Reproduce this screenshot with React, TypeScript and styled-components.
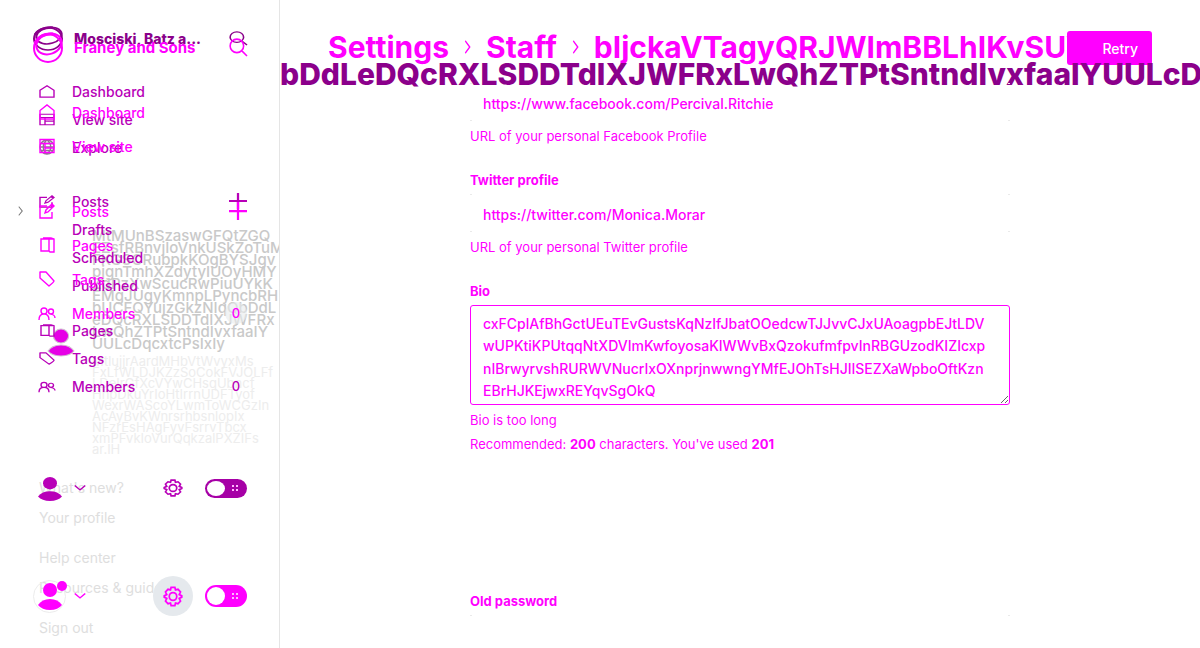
import React from 'react';
import styled, { createGlobalStyle } from 'styled-components';

const pink = '#ff00ff';
const violet = '#b800b8';
const plum = '#8b008b';

const Global = createGlobalStyle`
  * { box-sizing: border-box; }
  body { margin: 0; background: #fff; font-family: Inter, "Liberation Sans", sans-serif; font-size: 14px; }
  button, input, textarea { font: inherit; color: inherit; }
  button { border: 0; padding: 0; background: none; }
  a { color: inherit; text-decoration: none; }
  svg { display: block; flex: none; }
`;

const Page = styled.div`
  display: grid;
  grid-template-columns: 280px minmax(0, 1fr);
  height: 100vh;
  overflow: hidden;
`;

const Sidebar = styled.aside`
  display: grid;
  grid-template-columns: minmax(0, 1fr);
  grid-template-rows: minmax(0, 1fr);
  border-right: 1px solid #e5e5e5;
  overflow: hidden;
`;

const Layer = styled.div<{ $color: string; $top: number; $bottom?: number }>`
  grid-area: 1 / 1;
  display: flex;
  flex-direction: column;
  min-height: 0;
  padding: ${p => p.$top}px 32px ${p => p.$bottom ?? 0}px 33px;
  color: ${p => p.$color};
`;

const Brand = styled.header<{ $height: number; $color: string; $size: number; $weight: number }>`
  display: flex;
  align-items: center;
  flex: none;
  gap: 11px;
  height: ${p => p.$height}px;
  color: ${p => p.$color};
  font-size: ${p => p.$size}px;
  font-weight: ${p => p.$weight};
  white-space: nowrap;
`;

const BrandName = styled.span`
  flex: 1;
`;

const NavList = styled.ul<{ $gap: number }>`
  list-style: none;
  margin: ${p => p.$gap}px 0 0;
  padding: 0 0 0 6px;
`;

const NavRow = styled.li<{ $height: number }>`
  display: flex;
  align-items: center;
  height: ${p => p.$height}px;
  font-weight: 500;
`;

const NavLink = styled.a`
  display: flex;
  align-items: center;
  flex: 1;
`;

const IconSlot = styled.span<{ $muted: boolean }>`
  width: 33px;
  color: ${p => (p.$muted ? '#8f778f' : 'inherit')};
`;

const Count = styled.span<{ $fill: string }>`
  display: grid;
  place-items: center;
  width: 22px;
  height: 22px;
  border-radius: 50%;
  background: ${p => p.$fill};
  font-size: 13px;
`;

const PlusButton = styled.button`
  width: 18px;
`;

const Expander = styled.button`
  width: 8px;
  margin-left: -22px;
  margin-right: 14px;
  color: #777;
`;

const UserRow = styled.div`
  display: flex;
  align-items: center;
  flex: none;
  height: 40px;
  margin-top: auto;
`;

const Avatar = styled.button<{ $ring: string }>`
  position: relative;
  display: grid;
  place-items: center;
  width: 33px;
  height: 33px;
  margin-right: 8px;
  border: 1px solid ${p => p.$ring};
  border-radius: 50%;
`;

const Badge = styled.span`
  position: absolute;
  top: 0;
  right: -2px;
  width: 10px;
  height: 10px;
  border-radius: 50%;
  background: ${pink};
`;

const GearButton = styled.button<{ $fill: string }>`
  display: grid;
  place-items: center;
  width: 40px;
  height: 40px;
  margin-left: auto;
  margin-right: 12px;
  border-radius: 50%;
  background: ${p => p.$fill};
`;

const Toggle = styled.input<{ $color: string; $height: number }>`
  appearance: none;
  display: flex;
  align-items: center;
  width: 42px;
  height: ${p => p.$height}px;
  margin: 0;
  padding: 0 8px 0 2px;
  border-radius: 11px;
  background: ${p => p.$color};
  &::before {
    content: '';
    width: 18px;
    height: ${p => p.$height - 4}px;
    border-radius: 50%;
    background: #fff;
  }
  &::after {
    content: '';
    width: 8px;
    height: 8px;
    margin-left: auto;
    background: radial-gradient(circle, #ffb8ff 1px, transparent 1px) 0 0 / 4px 4px;
  }
`;

const UserCard = styled.div`
  display: flex;
  gap: 18px;
  color: #c9c9c9;
`;

const UserText = styled.div`
  flex: none;
`;

const UserName = styled.div`
  font-size: 15px;
  font-weight: 500;
  line-height: 12px;
  white-space: pre;
`;

const UserMail = styled.div`
  margin-top: 6px;
  color: #ededed;
  font-size: 13px;
  line-height: 11px;
  white-space: pre;
`;

const CardAvatar = styled.div`
  display: flex;
  width: 42px;
  padding: 99px 0 0 15px;
  color: #e600e6;
`;

const Menu = styled.nav`
  display: flex;
  flex-direction: column;
  margin-top: auto;
  padding-left: 6px;
  line-height: 20px;
`;

const MenuLink = styled.a<{ $gap?: number }>`
  margin-top: ${p => p.$gap ?? 10}px;
`;

const Main = styled.main`
  display: flex;
  flex-direction: column;
  min-width: 0;
  overflow: hidden;
  color: ${pink};
`;

const TopBar = styled.header`
  display: flex;
  flex: none;
  align-items: center;
  height: 65px;
  padding: 31px 48px 0 48px;
`;

const Crumbs = styled.h2`
  display: flex;
  align-items: center;
  flex: 1;
  min-width: 0;
  margin: 0;
  gap: 14px;
  overflow: hidden;
  font-size: 30px;
  font-weight: 700;
  line-height: 32px;
  padding-bottom: 2px;
  white-space: nowrap;
`;

const Retry = styled.button`
  display: flex;
  align-items: center;
  justify-content: flex-end;
  width: 85px;
  height: 34px;
  padding-right: 14px;
  border-radius: 3px;
  background: ${pink};
  color: #fff;
  font-size: 14px;
  font-weight: 500;
`;

const Banner = styled.h1`
  flex: none;
  height: 18px;
  margin: 0;
  color: ${plum};
  font-size: 30px;
  font-weight: 800;
  line-height: 18px;
  white-space: nowrap;
`;

const Form = styled.form`
  width: 540px;
  max-width: 100%;
  margin: 0 auto;
`;

const Field = styled.div<{ $gap?: number }>`
  display: flex;
  flex-direction: column;
  margin-bottom: ${p => p.$gap ?? 28}px;
`;

const Label = styled.label`
  margin-bottom: 6px;
  font-size: 13px;
  font-weight: 700;
  line-height: 16px;
`;

const TextBox = styled.input`
  height: 38px;
  padding: 3px 13px 0;
  border: 0;
  outline: 0;
  font-size: 14px;
  font-weight: 500;
  background:
    linear-gradient(#eaeaea, #eaeaea) 0 0 / 2px 1px no-repeat,
    linear-gradient(#eaeaea, #eaeaea) 100% 0 / 2px 1px no-repeat,
    linear-gradient(#eaeaea, #eaeaea) 0 100% / 2px 1px no-repeat,
    linear-gradient(#eaeaea, #eaeaea) 100% 100% / 2px 1px no-repeat;
`;

const BioBox = styled.textarea`
  height: 100px;
  padding: 7px 12px;
  border: 1px solid ${pink};
  border-radius: 3px;
  outline: 0;
  overflow: hidden;
  font-size: 14px;
  font-weight: 500;
  line-height: 1.6;
`;

const Help = styled.p<{ $gap?: number }>`
  margin: ${p => p.$gap ?? 7}px 0 0;
  font-size: 13px;
  line-height: 16px;
`;

type IconName = 'home' | 'site' | 'globe' | 'posts' | 'pages' | 'tag' | 'members' | 'search' | 'plus' | 'right' | 'down' | 'gear';

const shapes: Record<IconName, React.ReactNode> = {
  home: <path d="M1 6.500 8 1l7 5.500V15H1Z" />,
  site: <path d="M1 1.500h14v13H1ZM1 5.500h14M6 5.500v9M6 10h9" />,
  globe: <path d="M8 1a7 7 0 1 0 0 14A7 7 0 0 0 8 1ZM1 8h14M2 4.500h12M2 11.500h12M8 1c-5 4-5 10 0 14 5-4 5-10 0-14" />,
  posts: <path d="M8 3H1v12h12V9M6 10l1-3 6-6 2 2-6 6ZM12 2l2 2" />,
  pages: <path d="M2 2h8v12H2ZM4 1h8l3 1v13h-4l-1-1M10 2h4" />,
  tag: <path d="M1 1h6l8 9q0 1-5 5L1 7Z" strokeLinejoin="round" />,
  members: <path d="M5 3a3 3 0 1 1 0 6 3 3 0 0 1 0-6ZM0 15c0-4 2-6 5-6s5 2 5 6M12 4a2 2 0 1 1 0 5 2 2 0 0 1 0-5M11 9c3 0 5 2 5 4" />,
  search: <path d="M7 1a6 6 0 1 1 0 12A6 6 0 0 1 7 1ZM11 11l5 5" />,
  plus: <path d="M8 0v16M0 8h16" />,
  right: <path d="m4 1 8 7-8 7" />,
  down: <path d="m1 4 7 7 7-7" />,
  gear: <path d="m6.500 1-.5 2-2-.5-2 2 1 2-2 1v1l2 1-1 2 2 2 2-.5.5 2h3l.5-2 2 .5 2-2-1-2 2-1v-1l-2-1 1-2-2-2-2 .5-.5-2ZM8 5a3 3 0 1 0 0 6 3 3 0 0 0 0-6Z" />,
};

function Icon({ name, w = 16, h = 16, stroke = 1.4 }: { name: IconName; w?: number; h?: number; stroke?: number }) {
  return (
    <svg width={w} height={h} viewBox="0 0 16 16" preserveAspectRatio="none" fill="none" stroke="currentColor" strokeWidth={stroke} overflow="visible" aria-hidden="true">
      {shapes[name]}
    </svg>
  );
}

function Logo({ h }: { h: number }) {
  return (
    <svg width="30" height={h} viewBox="0 0 30 30" preserveAspectRatio="none" fill="none" stroke="currentColor" overflow="visible" aria-hidden="true">
      <circle cx="15" cy="16" r="14" strokeWidth="2" />
      <ellipse cx="16" cy="12" rx="13" ry="10" strokeWidth="2" transform="rotate(-20 16 12)" />
      <path d="M2 11Q8 1 20 2" strokeWidth="3" />
    </svg>
  );
}

function Person({ w, h, outline = 'none' }: { w: number; h: number; outline?: string }) {
  return (
    <svg width={w} height={h} viewBox="0 0 24 26" preserveAspectRatio="none" fill="currentColor" stroke={outline} overflow="visible" aria-hidden="true">
      <ellipse cx="12" cy="7" rx="7" ry="7" />
      <path d="M0 22q4-6 12-6t12 6q-4 5-12 5T0 22Z" />
    </svg>
  );
}

function Item({ icon, label, height, children }: { icon?: IconName; label: string; height: number; children?: React.ReactNode }) {
  return (
    <NavRow $height={height}>
      {height > 30 && label === 'Posts' && <Expander type="button" aria-label="Expand posts"><Icon name="right" w={7} h={10} stroke={2} /></Expander>}
      <NavLink href="#">
        <IconSlot $muted={icon === 'globe'}>{icon && <Icon name={icon} h={height > 30 || icon === 'globe' ? 16 : 13} />}</IconSlot>
        {label}
      </NavLink>
      {children}
    </NavRow>
  );
}

function Account({ ring, fill, toggle, height, badge }: { ring: string; fill: string; toggle: string; height: number; badge?: boolean }) {
  return (
    <UserRow>
      <Avatar type="button" aria-label="Account" $ring={ring}>
        <Person w={24} h={height + 4} />
        {badge && <Badge />}
      </Avatar>
      <Icon name="down" w={12} h={10} stroke={2} />
      <GearButton type="button" aria-label="Settings" $fill={fill}><Icon name="gear" w={20} h={height - 1} /></GearButton>
      <Toggle type="checkbox" aria-label="Night mode" $color={toggle} $height={height} />
    </UserRow>
  );
}

const nameLines = [
  'MtMUnBSzaswGFQtZGQ', 'EZsfRBnvjIoVnkUSkZoTuM', 'FKGSCRubpkKOgBYSJgv', 'pjgnTmhXZdytyIUOyHMY', 'ZdPzXwScucRwPiuUYkK',
  'EMgJUgyKmnpLPyncbRH', 'bUCFQYujzGkzNIqQbDdL', 'eDQcRXLSDDTdIXJWFRx', 'LwQhZTPtSntndIvxfaaIY', 'UULcDqcxtcPsIxIy',
];

const mailLines = [
  'MtlujjrAardMHbVtWvyxMs', 'FxLfWLDJKZzSoCokFVJOLFf', 'LDeIrGfXcVYwCHsqUbncf', 'HhpDkuYrIoHtIrrnUDFTyof',
  'WexrWAScoYLwmToWCGzIn', 'AcAyBvKWnrsrhbsnlopIx', 'NFzrEsHAgFyvFsrrvTbcx', 'xmPFvkIoVurQqkzalPXZIFs', 'ar.IH',
];

const bio = [
  'cxFCplAfBhGctUEuTEvGustsKqNzIfJbatOOedcwTJJvvCJxUAoagpbEJtLDV',
  'wUPKtiKPUtqqNtXDVImKwfoyosaKIWWvBxQzokufmfpvInRBGUzodKIZIcxp',
  'nIBrwyrvshRURWVNucrIxOXnprjnwwngYMfEJOhTsHJIISEZXaWpboOftKzn',
  'EBrHJKEjwxREYqvSgOkQ',
].join('\n');

export default function App() {
  return (
    <>
      <Global />
      <Page>
        <Sidebar>
          <Layer $color="#c9c9c9" $top={230}>
            <UserCard>
              <CardAvatar><Person w={26} h={26} outline="#d0c0d0" /></CardAvatar>
              <UserText>
                <UserName>{nameLines.join('\n')}</UserName>
                <UserMail>{mailLines.join('\n')}</UserMail>
              </UserText>
            </UserCard>
          </Layer>
          <Layer $color="#dedede" $top={0} $bottom={10}>
            <Menu>
              <MenuLink href="#">What's new?</MenuLink>
              <MenuLink href="#">Your profile</MenuLink>
              <MenuLink href="#" $gap={20}>Help center</MenuLink>
              <MenuLink href="#">Resources &amp; guides</MenuLink>
              <MenuLink href="#" $gap={20}>Sign out</MenuLink>
            </Menu>
          </Layer>
          <Layer $color={violet} $top={26} $bottom={140}>
            <Brand $height={24} $color={plum} $size={14} $weight={800}>
              <Logo h={24} />
              <BrandName>Mosciski, Batz a...</BrandName>
              <Icon name="search" w={18} h={14} />
            </Brand>
            <NavList $gap={27}>
              <Item icon="home" label="Dashboard" height={28} />
              <Item icon="site" label="View site" height={28} />
              <Item icon="globe" label="Explore" height={28} />
            </NavList>
            <NavList $gap={26}>
              <Item icon="posts" label="Posts" height={28}>
                <PlusButton type="button" aria-label="New post"><Icon name="plus" w={18} h={16} stroke={2} /></PlusButton>
              </Item>
              <Item label="Drafts" height={28} />
              <Item label="Scheduled" height={28} />
              <Item label="Published" height={28} />
            </NavList>
            <NavList $gap={17}>
              <Item icon="pages" label="Pages" height={28} />
              <Item icon="tag" label="Tags" height={28} />
              <Item icon="members" label="Members" height={28}><Count $fill="transparent">0</Count></Item>
            </NavList>
            <Account ring="transparent" fill="transparent" toggle="#a600a6" height={19} />
          </Layer>
          <Layer $color={pink} $top={32} $bottom={32}>
            <Brand $height={30} $color={pink} $size={15} $weight={700}>
              <Logo h={30} />
              <BrandName>Franey and Sons</BrandName>
              <Icon name="search" w={18} h={18} />
            </Brand>
            <NavList $gap={33}>
              <Item icon="home" label="Dashboard" height={34} />
              <Item icon="site" label="View site" height={34} />
            </NavList>
            <NavList $gap={31}>
              <Item icon="posts" label="Posts" height={34}>
                <PlusButton type="button" aria-label="New post"><Icon name="plus" w={18} h={18} stroke={2} /></PlusButton>
              </Item>
              <Item icon="pages" label="Pages" height={34} />
              <Item icon="tag" label="Tags" height={34} />
              <Item icon="members" label="Members" height={34}><Count $fill="#e8ebed99">0</Count></Item>
            </NavList>
            <Account ring="#ececec" fill="#e5e9ed" toggle={pink} height={22} badge />
          </Layer>
        </Sidebar>
        <Main>
          <TopBar>
            <Crumbs>
              <a href="#">Settings</a>
              <Icon name="right" w={9} h={14} stroke={2} />
              <a href="#">Staff</a>
              <Icon name="right" w={9} h={14} stroke={2} />
              <span>bIjckaVTagyQRJWImBBLhIKvSUVy</span>
            </Crumbs>
            <Retry type="button">Retry</Retry>
          </TopBar>
          <Banner>bDdLeDQcRXLSDDTdIXJWFRxLwQhZTPtSntndIvxfaaIYUULcDqcxtcPsIxIy</Banner>
          <Form>
            <Field>
              <TextBox aria-label="Facebook profile" defaultValue="https://www.facebook.com/Percival.Ritchie" />
              <Help>URL of your personal Facebook Profile</Help>
            </Field>
            <Field>
              <Label htmlFor="twitter">Twitter profile</Label>
              <TextBox id="twitter" defaultValue="https://twitter.com/Monica.Morar" />
              <Help>URL of your personal Twitter profile</Help>
            </Field>
            <Field $gap={141}>
              <Label htmlFor="bio">Bio</Label>
              <BioBox id="bio" spellCheck={false} defaultValue={bio} />
              <Help>Bio is too long</Help>
              <Help $gap={8}>Recommended: <b>200</b> characters. You've used <b>201</b></Help>
            </Field>
            <Field>
              <Label htmlFor="old">Old password</Label>
              <TextBox id="old" type="password" />
            </Field>
          </Form>
        </Main>
      </Page>
    </>
  );
}
